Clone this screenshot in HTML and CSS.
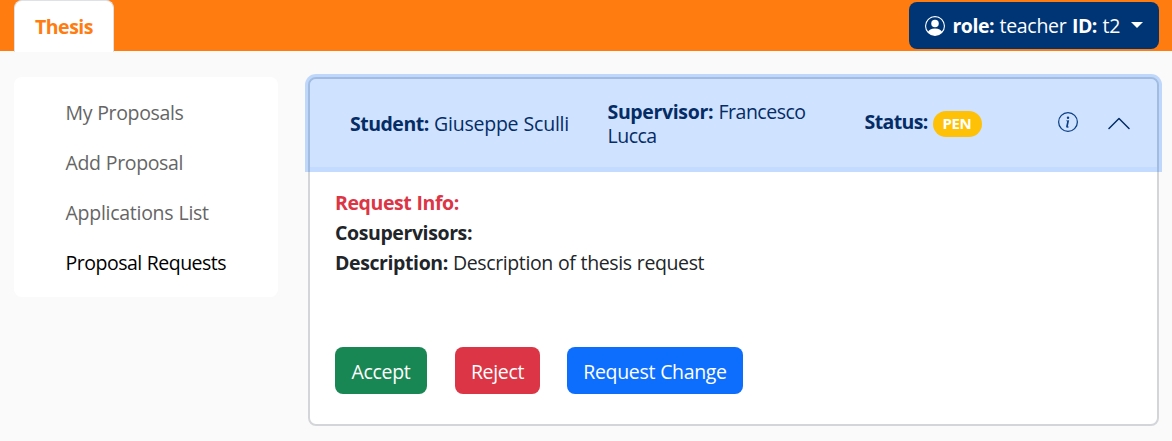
FILE: index.html
```html
<!DOCTYPE html>
<html lang="en">
<head>
<meta charset="utf-8">
<title>Thesis</title>
<link rel="stylesheet" href="styles.css">
</head>
<body>
<header class="topbar">
  <a class="tab"><b>Thesis</b></a>
  <button class="user">
    <svg class="person" viewBox="0 0 16 16" fill="currentColor"><path d="M11 6a3 3 0 1 1-6 0 3 3 0 0 1 6 0"/><path fill-rule="evenodd" d="M0 8a8 8 0 1 1 16 0A8 8 0 0 1 0 8m8-7a7 7 0 0 0-5.468 11.37C3.242 11.226 4.805 10 8 10s4.757 1.225 5.468 2.37A7 7 0 0 0 8 1"/></svg>
    <span class="who"><b>role:</b> teacher <b>ID:</b> t2</span>
    <span class="caret"></span>
  </button>
</header>
<div class="page">
  <nav class="side">
    <a class="link">My Proposals</a>
    <a class="link">Add Proposal</a>
    <a class="link wide">Applications List</a>
    <a class="link active">Proposal Requests</a>
  </nav>
  <main class="card">
    <div class="head">
      <div class="student"><b>Student:</b> Giuseppe Sculli</div>
      <div class="supervisor"><b>Supervisor:</b> Francesco Lucca</div>
      <div class="status"><b>Status:</b><span class="badge">PEN</span></div>
      <svg class="info" viewBox="0 0 16 16" fill="currentColor"><path d="M8 15A7 7 0 1 1 8 1a7 7 0 0 1 0 14m0 1A8 8 0 1 0 8 0a8 8 0 0 0 0 16"/><path d="m8.930 6.588-2.290.287-.082.380.450.083c.294.070.352.176.288.469l-.738 3.468c-.194.897.105 1.319.808 1.319.545 0 1.178-.252 1.465-.598l.088-.416c-.200.176-.492.246-.686.246-.275 0-.375-.193-.304-.533zM9 4.500a1 1 0 1 1-2 0 1 1 0 0 1 2 0"/></svg>
      <svg class="chevron" viewBox="0 0 22 13" fill="none" stroke="currentColor" stroke-width="1.500" stroke-linecap="round" stroke-linejoin="round"><path d="M1 11.500 11 1.500 21 11.500"/></svg>
    </div>
    <div class="body">
      <div class="line danger"><b>Request Info:</b></div>
      <div class="line"><b>Cosupervisors:</b></div>
      <div class="line"><b>Description:</b> Description of thesis request</div>
      <div class="actions">
        <button class="btn accept">Accept</button>
        <button class="btn reject">Reject</button>
        <button class="btn change">Request Change</button>
      </div>
    </div>
  </main>
</div>
</body>
</html>
```
FILE: styles.css
```css
* { box-sizing: border-box; }
body { margin: 0; height: 441px; overflow: hidden; background: #fafafa; color: #212529; font: 400 19.5px/30px "Open Sans", "Noto Sans", sans-serif; letter-spacing: -0.38px; word-spacing: 0.4px; }
b { font-weight: 700; letter-spacing: -0.4px; }
button { font: inherit; letter-spacing: inherit; word-spacing: inherit; border: 0; color: #fff; white-space: nowrap; }
.topbar { height: 51px; background: #ff7c11; display: flex; justify-content: space-between; padding: 0 13px 0 14px; }
.tab { width: 100px; height: 52px; background: #fff; border: 1px solid #dee2e6; border-bottom: 0; border-radius: 8px 8px 0 0; color: #ff7c11; padding: 11px 0 0 20px; }
.tab b { letter-spacing: -0.5px; }
.user { margin-top: 2px; width: 250px; height: 47px; border-radius: 8px; background: #003575; display: flex; align-items: center; padding: 0 16px; }
.person { width: 20px; height: 20px; margin-right: 7.5px; }
.who { width: 172.5px; text-align: left; letter-spacing: -0.3px; word-spacing: 0.8px; }
.who b { letter-spacing: -0.5px; }
.caret { margin-left: 6px; border: 6px solid transparent; border-top-color: #fff; border-bottom: 0; margin-top: -2px; }
.page { display: flex; align-items: flex-start; gap: 30px; padding: 25px 13px 0 14px; }
.side { margin-top: 1px; width: 264px; height: 220px; background: #fff; border-radius: 8px; padding: 11px 0 0 51.5px; }
.link { display: block; height: 50px; line-height: 50px; color: #656565; white-space: nowrap; letter-spacing: -0.35px; }
.wide { letter-spacing: -0.27px; }
.active { color: #000; letter-spacing: -0.49px; }
.card { margin-top: 1px; width: 851px; height: 349px; background: #fff; border: 2px solid #d3d5d9; border-radius: 8px; }
.head { height: 88px; background: #cfe2ff; color: #052c65; border-radius: 6px 6px 0 0; box-shadow: 0 0 0 5px rgba(13,110,253,.25); display: flex; padding-left: 40px; line-height: 24px; }
.student { width: 258px; padding-top: 33px; letter-spacing: -0.22px; }
.student b { letter-spacing: -0.5px; }
.supervisor { width: 257px; padding: 21px 40px 0 0; margin-left: -0.5px; letter-spacing: -0.5px; word-spacing: 0.8px; }
.supervisor b { letter-spacing: -0.35px; }
.status { width: 193px; padding-top: 31px; display: flex; }
.status b { width: 63px; letter-spacing: -0.6px; }
.badge { width: 49px; height: 26px; margin: 1px 0 0 5px; border-radius: 13px; background: #ffc107; color: #fff; font-size: 15px; line-height: 25px; font-weight: 700; text-align: center; }
.info { width: 20px; height: 20px; margin-top: 33px; color: #0b3f86; }
.chevron { width: 22px; height: 13px; margin: 38px 0 0 30.5px; }
.body { padding: 21px 25px; }
.line { height: 30px; white-space: nowrap; }
.danger { color: #dc3545; }
.actions { display: flex; margin-top: 69px; }
.btn { height: 47px; border-radius: 8px; padding: 3px 0 0; text-align: center; letter-spacing: -0.33px; }
.accept { width: 92px; background: #198754; margin-right: 28px; }
.reject { width: 85px; background: #dc3545; margin-right: 27px; }
.change { width: 176px; background: #0d6efd; }
```
